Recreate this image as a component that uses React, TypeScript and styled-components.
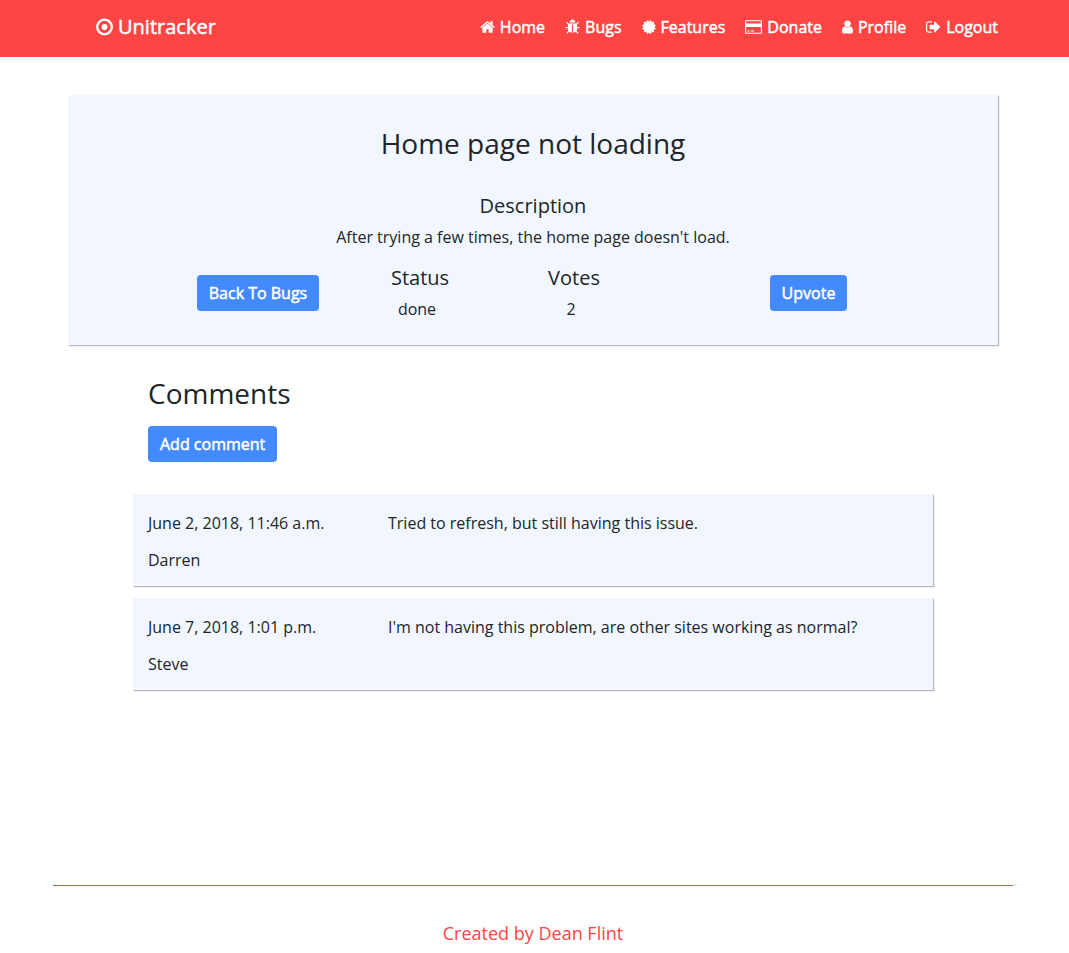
import React from 'react';
import styled, { createGlobalStyle } from 'styled-components';

const GlobalStyle = createGlobalStyle`
  *, *::before, *::after { box-sizing: border-box; }
  body {
    margin: 0;
    background: #fff;
    color: #212529;
    font-family: "Open Sans", "Noto Sans", sans-serif;
    font-size: 16px;
    line-height: 24px;
  }
  h1, h2, h3, p { margin: 0; font-weight: 400; }
`;

const Page = styled.div`
  display: flex;
  flex-direction: column;
  min-height: 100vh;
`;

const Header = styled.header`
  background: #ff4444;
`;

const HeaderInner = styled.div`
  display: flex;
  align-items: center;
  justify-content: space-between;
  height: 57px;
  padding: 0 71px 3px 96px;
`;

const Brand = styled.a`
  display: flex;
  align-items: center;
  gap: 5px;
  color: #fff;
  font-size: 20px;
  line-height: 30px;
  text-decoration: none;
  -webkit-text-stroke: 0.5px #fff;
`;

const Nav = styled.nav`
  display: flex;
  gap: 20px;
`;

const NavLink = styled.a`
  display: flex;
  align-items: center;
  gap: 5px;
  color: #fff;
  text-decoration: none;
  -webkit-text-stroke: 0.5px #fff;
`;

const Icon = styled.svg`
  flex: none;
  fill: currentColor;
  stroke: none;
`;

const Container = styled.main`
  flex: 1;
  width: 100%;
  max-width: 963px;
  margin: 0 auto;
  padding: 38px 18px 0 15px;
`;

const Panel = styled.section`
  background: #f2f7ff;
  box-shadow: 1px 1px 1px #b6b6be;
`;

const BugPanel = styled(Panel)`
  padding: 31px 0 24px;
  text-align: center;
`;

const Heading = styled.h2`
  font-size: 28px;
  line-height: 34px;
`;

const SubHeading = styled.h3`
  font-size: 20px;
  line-height: 26px;
  margin-bottom: 6px;
`;

const Description = styled.div`
  margin-top: 33px;
`;

const Facts = styled.div`
  display: grid;
  grid-template-columns: 170fr 154fr 154fr 315fr;
  align-items: center;
  justify-items: center;
  margin-top: 16px;
  padding: 0 32px 0 105px;
`;

const FactValue = styled.p`
  padding-right: 6px;
`;

const Button = styled.button`
  height: 36px;
  padding: 0 12px;
  border: 0;
  border-radius: 4px;
  background: #448aff;
  color: #fff;
  font: inherit;
  cursor: pointer;
  -webkit-text-stroke: 0.5px #fff;
`;

const Comments = styled.section`
  padding: 31px 65px 0;
`;

const CommentsHead = styled.div`
  display: flex;
  flex-direction: column;
  align-items: flex-start;
  gap: 16px;
  padding: 0 15px;
  margin-bottom: 32px;
`;

const Comment = styled(Panel).attrs({ as: 'article' })`
  display: grid;
  grid-template-columns: 240px 1fr;
  padding: 17px 15px 14px;
  margin-bottom: 12px;
`;

const Meta = styled.div`
  display: flex;
  flex-direction: column;
  gap: 13px;
`;

const Footer = styled.footer`
  width: 100%;
  max-width: 963px;
  margin: 0 auto;
  padding-right: 3px;
`;

const FooterInner = styled.div`
  border-top: 1px solid #ff4444;
  padding: 34px 0 6px;
  text-align: center;
`;

const FooterLink = styled.a`
  color: #ff4444;
  font-size: 18px;
  line-height: 27px;
  text-decoration: none;
`;

const navItems = [
  {
    label: 'Home',
    width: 15,
    viewBox: '64 0 1664 1792',
    path: 'M1472 992v480q0 26-19 45t-45 19h-384v-384h-256v384h-384q-26 0-45-19t-19-45v-480q0-1 .5-3t.5-3l575-474 575 474q1 2 1 6zm223-69l-62 74q-8 9-21 11h-3q-13 0-21-7l-692-577-692 577q-12 8-24 7-13-2-21-11l-62-74q-8-10-7-23.5t11-21.5l719-599q32-26 76-26t76 26l244 204v-195q0-14 9-23t23-9h192q14 0 23 9t9 23v408l219 182q10 8 11 21.5t-7 23.5z',
  },
  {
    label: 'Bugs',
    width: 15,
    viewBox: '64 0 1664 1792',
    path: 'M1696 960q0 26-19 45t-45 19h-224q0 171-67 290l208 209q19 19 19 45t-19 45q-18 19-45 19t-45-19l-198-197q-5 5-15 13t-42 28.5-65 36.5-82 29-97 13v-896h-128v896q-51 0-101.5-13.5t-87-33-66-39-43.5-32.5l-15-14-183 207q-20 21-48 21-24 0-43-16-19-18-20.5-44.5t15.5-46.5l202-227q-58-114-58-274h-224q-26 0-45-19t-19-45 19-45 45-19h224v-294l-173-173q-19-19-19-45t19-45 45-19 45 19l173 173h844l173-173q19-19 45-19t45 19 19 45-19 45l-173 173v294h224q26 0 45 19t19 45zm-480-576h-640q0-133 93.5-226.5t226.5-93.5 226.5 93.5 93.5 226.5z',
  },
  {
    label: 'Features',
    width: 14,
    viewBox: '128 0 1536 1792',
    path: 'M1504 896l138 135q30 28 20 70-12 41-52 51l-188 48 53 186q12 41-19 70-29 31-70 19l-186-53-48 188q-10 40-51 52-12 2-19 2-31 0-51-22l-135-138-135 138q-28 30-70 20-41-11-51-52l-48-188-186 53q-41 12-70-19-31-29-19-70l53-186-188-48q-40-10-52-51-10-42 20-70l138-135-138-135q-30-28-20-70 12-41 52-51l188-48-53-186q-12-41 19-70 29-31 70-19l186 53 48-188q10-41 51-51 41-12 70 19l135 139 135-139q29-30 70-19 41 10 51 51l48 188 186-53q41-12 70 19 31 29 19 70l-53 186 188 48q40 10 52 51 10 42-20 70z',
  },
  {
    label: 'Donate',
    width: 17,
    viewBox: '0 0 1920 1792',
    path: 'M160 128h1600q66 0 113 47t47 113v1216q0 66-47 113t-113 47h-1600q-66 0-113-47t-47-113v-1216q0-66 47-113t113-47zM160 256q-13 0-22.500 9.500t-9.500 22.500v224h1664v-224q0-13-9.500-22.500t-22.500-9.500zM1760 1536q13 0 22.500-9.500t9.500-22.500v-608h-1664v608q0 13 9.500 22.500t22.500 9.500zM256 1408v-128h256v128zM640 1408v-128h384v128z',
  },
  {
    label: 'Profile',
    width: 11,
    viewBox: '256 0 1280 1792',
    path: 'M1536 1399q0 109-62.5 187t-150.5 78h-854q-88 0-150.5-78t-62.5-187q0-85 8.5-160.5t31.5-152 58.5-131 94-89 134.5-34.5q131 128 313 128t313-128q76 0 134.5 34.5t94 89 58.5 131 31.5 152 8.5 160.5zm-256-887q0 159-112.5 271.5t-271.5 112.5-271.5-112.5-112.5-271.5 112.5-271.5 271.5-112.5 271.5 112.5 112.5 271.5z',
  },
  {
    label: 'Logout',
    width: 15,
    viewBox: '64 0 1664 1792',
    path: 'M704 1440q0 4 1 20t.5 26.5-3 23.5-10 19.5-20.5 6.5h-320q-119 0-203.500-84.500t-84.500-203.500v-704q0-119 84.500-203.500t203.500-84.500h320q13 0 22.500 9.500t9.500 22.500q0 4 1 20t.5 26.500-3 23.500-10 19.500-20.500 6.500h-320q-66 0-113 47t-47 113v704q0 66 47 113t113 47h312l11.500 1 11.500 3 8 5.500 7 9 2 13.500zm928-544q0 26-19 45l-544 544q-19 19-45 19t-45-19-19-45v-288h-448q-26 0-45-19t-19-45v-384q0-26 19-45t45-19h448v-288q0-26 19-45t45-19 45 19l544 544q19 19 19 45z',
  },
];

const comments = [
  { date: 'June 2, 2018, 11:46 a.m.', author: 'Darren', text: 'Tried to refresh, but still having this issue.' },
  { date: 'June 7, 2018, 1:01 p.m.', author: 'Steve', text: "I'm not having this problem, are other sites working as normal?" },
];

export default function App() {
  return (
    <Page>
      <GlobalStyle />
      <Header>
        <HeaderInner>
          <Brand href="#">
            <Icon width="17" height="18" viewBox="0 0 17 18" aria-hidden="true">
              <circle cx="8.5" cy="9" r="7.3" fill="none" stroke="currentColor" strokeWidth="2.3" />
              <circle cx="8.5" cy="9" r="2.9" />
            </Icon>
            Unitracker
          </Brand>
          <Nav>
            {navItems.map((item) => (
              <NavLink href="#" key={item.label}>
                <Icon width={item.width} height="16" viewBox={item.viewBox} aria-hidden="true">
                  <path fillRule="evenodd" d={item.path} />
                </Icon>
                {item.label}
              </NavLink>
            ))}
          </Nav>
        </HeaderInner>
      </Header>
      <Container>
        <BugPanel>
          <Heading as="h1">Home page not loading</Heading>
          <Description>
            <SubHeading>Description</SubHeading>
            <p>After trying a few times, the home page doesn't load.</p>
          </Description>
          <Facts>
            <Button type="button">Back To Bugs</Button>
            <div>
              <SubHeading>Status</SubHeading>
              <FactValue>done</FactValue>
            </div>
            <div>
              <SubHeading>Votes</SubHeading>
              <FactValue>2</FactValue>
            </div>
            <Button type="button">Upvote</Button>
          </Facts>
        </BugPanel>
        <Comments>
          <CommentsHead>
            <Heading>Comments</Heading>
            <Button type="button">Add comment</Button>
          </CommentsHead>
          {comments.map((comment) => (
            <Comment key={comment.date}>
              <Meta>
                <p>{comment.date}</p>
                <p>{comment.author}</p>
              </Meta>
              <p>{comment.text}</p>
            </Comment>
          ))}
        </Comments>
      </Container>
      <Footer>
        <FooterInner>
          <FooterLink href="#">Created by Dean Flint</FooterLink>
        </FooterInner>
      </Footer>
    </Page>
  );
}
